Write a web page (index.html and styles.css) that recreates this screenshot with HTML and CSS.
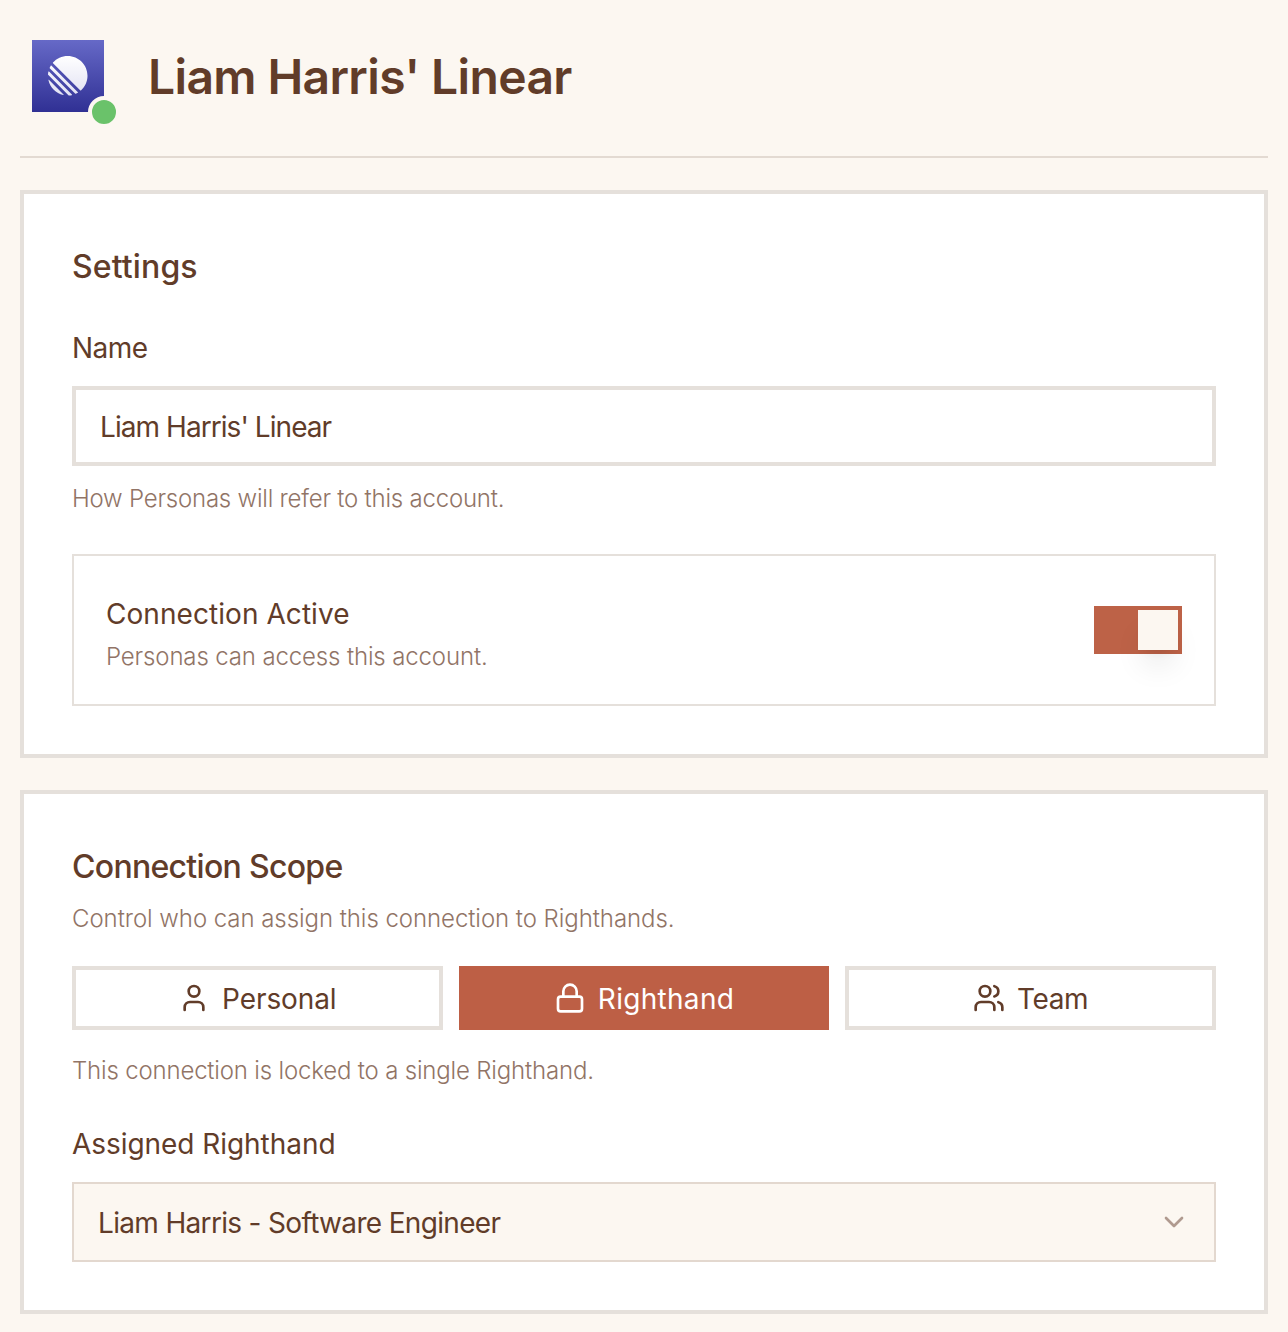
FILE: index.html
```html
<!DOCTYPE html>
<html lang="en">
<head>
<meta charset="utf-8">
<title>Liam Harris' Linear</title>
<link rel="stylesheet" href="styles.css">
</head>
<body>
<main class="page">
  <header class="header">
    <div class="logo">
      <svg class="logo-mark" viewBox="0 0 100 100" aria-hidden="true">
        <defs><linearGradient id="mark" x1="0" y1="0" x2="0" y2="1"><stop offset="0" stop-color="#fff"/><stop offset="1" stop-color="#e1e1f3"/></linearGradient></defs>
        <path fill="url(#mark)" d="M1.22541 61.5228c-.2225-.9485.90748-1.5459 1.59638-.857L39.3342 97.1782c.6889.6889.0915 1.8189-.857 1.5964C20.0515 94.4522 5.54779 79.9485 1.22541 61.5228ZM.00189135 46.8891c-.01764375.2833.08887215.5599.28957165.7606L52.3503 99.7085c.2007.2007.4773.3075.7606.2896 2.3692-.1476 4.6938-.46 6.9624-.9259.7645-.157 1.0301-1.0963.4782-1.6481L2.57595 39.4485c-.55186-.5519-1.49117-.2863-1.648174.4782-.465915 2.2686-.77832 4.5932-.92588465 6.9624ZM4.21093 29.7054c-.16649.3738-.08169.8106.20765 1.1l64.77602 64.776c.2894.2894.7262.3742 1.1.2077 1.7861-.7956 3.5171-1.6927 5.1855-2.684.5521-.328.6373-1.0867.1832-1.5407L8.43566 24.3367c-.45409-.4541-1.21271-.3689-1.54074.1832-.99132 1.6684-1.88843 3.3994-2.68399 5.1855ZM12.6587 18.074c-.3701-.3701-.393-.9637-.0443-1.3541C21.7795 6.45931 35.1114 0 49.9519 0 77.5927 0 100 22.4073 100 50.0481c0 14.8405-6.4593 28.1724-16.7199 37.3375-.3903.3487-.984.3258-1.3542-.0443L12.6587 18.074Z"/>
      </svg>
      <span class="status"></span>
    </div>
    <h1 class="title">Liam Harris' Linear</h1>
  </header>

  <section class="card">
    <h2 class="heading"><span class="t-settings">Settings</span></h2>
    <div class="label label-name"><span class="t-name">Name</span></div>
    <div class="input"><span class="t-value">Liam Harris' Linear</span></div>
    <p class="hint"><span class="t-refer">How Personas will refer to this account.</span></p>
    <div class="toggle-row">
      <div class="toggle-text">
        <div class="label"><span class="t-active">Connection Active</span></div>
        <p class="hint"><span class="t-access">Personas can access this account.</span></p>
      </div>
      <div class="switch"><span class="thumb"></span></div>
    </div>
  </section>

  <section class="card">
    <h2 class="heading"><span class="t-scope">Connection Scope</span></h2>
    <p class="hint hint-scope"><span class="t-control">Control who can assign this connection to Righthands.</span></p>
    <div class="options">
      <div class="option">
        <svg class="icon" viewBox="0 0 24 24"><path d="M19 21v-2a4 4 0 0 0-4-4H9a4 4 0 0 0-4 4v2"/><circle cx="12" cy="7" r="4"/></svg>
        <span class="t-personal">Personal</span>
      </div>
      <div class="option option-selected">
        <svg class="icon" viewBox="0 0 24 24"><rect width="18" height="11" x="3" y="11" rx="2"/><path d="M7 11V7a5 5 0 0 1 10 0v4"/></svg>
        <span class="t-righthand">Righthand</span>
      </div>
      <div class="option">
        <svg class="icon" viewBox="0 0 24 24"><path d="M16 21v-2a4 4 0 0 0-4-4H6a4 4 0 0 0-4 4v2"/><circle cx="9" cy="7" r="4"/><path d="M22 21v-2a4 4 0 0 0-3-3.87M16 3.13a4 4 0 0 1 0 7.75"/></svg>
        <span class="t-team">Team</span>
      </div>
    </div>
    <p class="hint hint-locked"><span class="t-locked">This connection is locked to a single Righthand.</span></p>
    <div class="label label-assigned"><span class="t-assigned">Assigned Righthand</span></div>
    <div class="select">
      <span class="t-engineer">Liam Harris - Software Engineer</span>
      <svg class="icon chevron" viewBox="0 0 24 24"><path d="m6 9 6 6 6-6"/></svg>
    </div>
  </section>
</main>
</body>
</html>
```
FILE: styles.css
```css
* { box-sizing: border-box; }

body {
  margin: 0;
  background: #fcf7f1;
  color: #613c29;
  font-family: Inter, "Liberation Sans", sans-serif;
  font-size: 28px;
  line-height: 40px;
  white-space: nowrap;
}

h1, h2, p { margin: 0; }

.page {
  display: flex;
  flex-direction: column;
  gap: 32px;
  padding: 20px;
}

.header {
  display: flex;
  align-items: flex-start;
  gap: 44px;
  height: 138px;
  padding: 20px 12px 0;
  border-bottom: 2px solid #e3dad2;
}

.logo {
  position: relative;
  display: flex;
  align-items: center;
  justify-content: center;
  width: 72px;
  height: 72px;
  background: linear-gradient(#6669c7, #303094);
}

.logo-mark { width: 39.5px; height: 39.5px; }

.status {
  position: absolute;
  right: -16px;
  bottom: -16px;
  width: 32px;
  height: 32px;
  border: 4px solid #fcf7f1;
  border-radius: 50%;
  background: #6ac26a;
}

.title {
  padding-top: 1px;
  font-size: 48px;
  font-weight: 600;
  line-height: 72px;
  letter-spacing: -0.64px;
}

.card {
  padding: 48px;
  border: 4px solid #e5e0db;
  background: #fff;
}

.heading {
  height: 48px;
  padding-top: 1px;
  font-size: 32px;
  font-weight: 500;
  line-height: 48px;
}

.label { line-height: 40px; }
.label-name { margin-top: 38px; }

.input {
  display: flex;
  align-items: center;
  height: 80px;
  margin: 18px 0 16px;
  padding: 2px 24px 0;
  border: 4px solid #e5e0db;
}

.hint {
  height: 32px;
  padding-top: 1px;
  color: #917466;
  font-size: 24px;
  font-weight: 300;
  line-height: 32px;
}

.toggle-row {
  display: flex;
  align-items: center;
  justify-content: space-between;
  height: 152px;
  margin-top: 40px;
  padding: 0 32px;
  border: 2px solid #e5e0db;
}

.toggle-text { display: grid; gap: 6px; padding-top: 6px; }

.switch {
  display: flex;
  justify-content: flex-end;
  width: 88px;
  height: 48px;
  padding: 4px;
  background: #bd6247;
}

.thumb {
  width: 40px;
  height: 40px;
  background: #fcf7f1;
  box-shadow: 0 20px 30px -6px rgba(0, 0, 0, .1), 0 8px 12px -8px rgba(0, 0, 0, .1);
}

.hint-scope { margin-top: 12px; }

.options {
  display: grid;
  grid-template-columns: repeat(3, 1fr);
  gap: 16px;
  margin: 32px 0 24px;
}

.option {
  display: flex;
  align-items: center;
  justify-content: center;
  gap: 12px;
  height: 64px;
  border: 4px solid #e5e0db;
}

.option span, .select span { padding-top: 2px; }

.option-selected {
  border-color: #bd5f45;
  background: #bd5f45;
  color: #fff;
}

.icon {
  width: 32px;
  height: 32px;
  fill: none;
  stroke: currentColor;
  stroke-width: 2;
  stroke-linecap: round;
  stroke-linejoin: round;
}

.label-assigned { margin: 38px 0 18px; }

.select {
  display: flex;
  align-items: center;
  justify-content: space-between;
  height: 80px;
  padding: 0 24px;
  border: 2px solid #e3d8cf;
  background: #fcf7f1;
}

.chevron { color: #b09a8f; }

/* Tracking per text */
.t-settings { letter-spacing: .12px; }
.t-name { letter-spacing: -.5px; }
.t-value { letter-spacing: -.94px; }
.t-refer { letter-spacing: -.22px; }
.t-active { letter-spacing: .06px; }
.t-access { letter-spacing: -.14px; }
.t-scope { letter-spacing: -.7px; }
.t-control { letter-spacing: -.06px; }
.t-personal { letter-spacing: -.1px; }
.t-righthand { letter-spacing: .3px; }
.t-team { letter-spacing: -.4px; }
.t-locked { letter-spacing: -.18px; }
.t-assigned { letter-spacing: -.05px; }
.t-engineer { letter-spacing: -.67px; }
```
